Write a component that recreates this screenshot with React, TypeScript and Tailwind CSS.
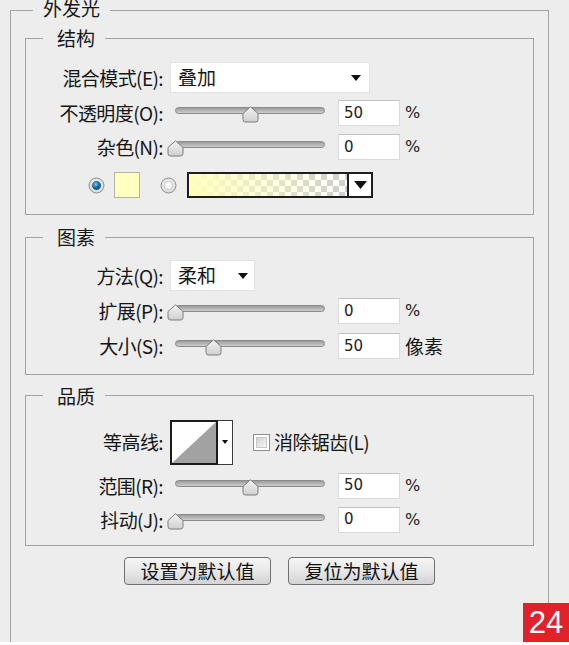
import React from 'react';

const cjk = "font-['Noto_Sans_CJK_SC','Noto_Sans',sans-serif]";

function Arrow({ big }: { big?: boolean }) {
  return big ? (
    <svg width="13" height="8" viewBox="0 0 13 8">
      <path d="M0 0 H13 L6.5 8 Z" fill="#111" />
    </svg>
  ) : (
    <svg width="10" height="6" viewBox="0 0 10 6">
      <path d="M0 0 H10 L5 6 Z" fill="#111" />
    </svg>
  );
}

function Thumb() {
  return (
    <svg width="17" height="17" viewBox="0 0 17 17">
      <defs>
        <linearGradient id="th" x1="0" y1="0" x2="0" y2="1">
          <stop offset="0" stopColor="#f4f4f4" />
          <stop offset="1" stopColor="#cfcfcf" />
        </linearGradient>
      </defs>
      <path
        d="M8.5 0.8 L16 7.5 V13.5 Q16 16 13.5 16 H3.5 Q1 16 1 13.5 V7.5 Z"
        fill="url(#th)"
        stroke="#7d7d7d"
        strokeWidth="1"
      />
    </svg>
  );
}

function Slider({ pos }: { pos: number }) {
  return (
    <div className="relative ml-[5px] h-[26px] w-[150px] shrink-0">
      <div className="mt-[7px] h-[7px] rounded-full border border-[#8a8a8a] bg-linear-to-b from-[#9c9c9c] to-[#cdcdcd]" />
      <div className="absolute top-[6px]" style={{ left: pos - 8 }}>
        <Thumb />
      </div>
    </div>
  );
}

function NumBox({ value }: { value: string }) {
  return (
    <div className="ml-[13px] flex h-[26px] w-[62px] items-center border border-[#dadada] border-t-[#c2c2c2] bg-white pl-[5px] font-['DejaVu_Sans',sans-serif] text-[15px] text-[#222]">
      {value}
    </div>
  );
}

function Unit({ children }: { children: React.ReactNode }) {
  return <span className="ml-[5px] font-['DejaVu_Sans',sans-serif] text-[16px] text-[#222]">{children}</span>;
}

function Row({ label, className, children }: { label: string; className?: string; children: React.ReactNode }) {
  return (
    <div className={`flex items-center ${className ?? ''}`}>
      <div className="w-[137px] shrink-0 text-right leading-[22px] tracking-[-0.6px]">{label}</div>
      <div className="ml-[7px] flex items-center">{children}</div>
    </div>
  );
}

function Group({ title, className, children }: { title: string; className?: string; children: React.ReactNode }) {
  return (
    <fieldset className={`w-[509px] border border-[#a3a3a3] ${className ?? ''}`}>
      <legend className="ml-[17px] pl-[14px] pr-[10px] leading-[22px]">{title}</legend>
      {children}
    </fieldset>
  );
}

function Radio({ checked }: { checked?: boolean }) {
  return (
    <svg width="17" height="17" viewBox="0 0 17 17">
      <defs>
        <radialGradient id="rOff" cx="0.5" cy="0.45" r="0.6">
          <stop offset="0" stopColor="#ffffff" />
          <stop offset="1" stopColor="#d2d2d2" />
        </radialGradient>
        <radialGradient id="rOn" cx="0.4" cy="0.35" r="0.7">
          <stop offset="0" stopColor="#7fd0f4" />
          <stop offset="0.5" stopColor="#1c74ad" />
          <stop offset="1" stopColor="#0b3f68" />
        </radialGradient>
      </defs>
      <circle cx="8.5" cy="8.5" r="7.5" fill="url(#rOff)" stroke="#8e8f8f" />
      {checked ? (
        <circle cx="8.5" cy="8.5" r="4.2" fill="url(#rOn)" stroke="#2a5d82" strokeWidth="0.6" />
      ) : (
        <circle cx="8.5" cy="8.5" r="4.2" fill="none" stroke="#c4c4c4" strokeWidth="0.8" />
      )}
    </svg>
  );
}

function GradientBar() {
  return (
    <div className="ml-[10px] flex h-[26px] w-[186px] border-2 border-[#1e1e1e] bg-white">
      <svg width="158" height="22" viewBox="0 0 158 22" className="shrink-0">
        <defs>
          <pattern id="chk" width="12" height="12" patternUnits="userSpaceOnUse">
            <rect width="12" height="12" fill="#ffffff" />
            <rect width="6" height="6" fill="#cfcfcf" />
            <rect x="6" y="6" width="6" height="6" fill="#cfcfcf" />
          </pattern>
          <linearGradient id="fade" x1="0" y1="0" x2="1" y2="0">
            <stop offset="0" stopColor="#ffffbe" stopOpacity="1" />
            <stop offset="1" stopColor="#ffffbe" stopOpacity="0" />
          </linearGradient>
        </defs>
        <rect width="158" height="22" fill="url(#chk)" />
        <rect width="158" height="22" fill="url(#fade)" />
      </svg>
      <div className="flex flex-1 items-center justify-center border-l-2 border-[#1e1e1e]">
        <Arrow big />
      </div>
    </div>
  );
}

function Contour() {
  return (
    <div className="flex h-[45px]">
      <div className="h-[45px] w-[48px] border-2 border-[#1c1c1c] bg-white">
        <svg width="44" height="41" viewBox="0 0 44 41">
          <path d="M0 41 L44 0 V41 Z" fill="#a2a2a2" />
        </svg>
      </div>
      <div className="flex w-[15px] items-center justify-center border border-l-0 border-[#3a3a3a] bg-white">
        <svg width="6" height="4" viewBox="0 0 6 4">
          <path d="M0 0 H6 L3 4 Z" fill="#111" />
        </svg>
      </div>
    </div>
  );
}

function Checkbox() {
  return (
    <div className="ml-[20px] flex h-[17px] w-[17px] items-center justify-center border border-[#8e8f8f] bg-white">
      <div className="h-[11px] w-[11px] border border-[#c8c8c8] bg-linear-to-br from-[#d4d4d4] to-[#f6f6f6]" />
    </div>
  );
}

function Button({ children }: { children: React.ReactNode }) {
  return (
    <button className="flex h-[28px] w-[147px] items-center justify-center rounded-[4px] border border-[#707070] bg-linear-to-b from-[#f5f5f5] via-[#e8e8e8] to-[#d3d3d3] text-[19px] leading-none text-[#111]">
      {children}
    </button>
  );
}

export default function App() {
  return (
    <div className={`h-[645px] w-[569px] overflow-hidden bg-white ${cjk} text-[19px] text-[#161616]`}>
      <div className="relative h-[642px] overflow-hidden bg-[#ededed]">
        <fieldset className="ml-[10px] h-[700px] w-[539px] border border-[#a3a3a3] px-[14px] pt-[7px]">
          <legend className="ml-2 px-[10px] leading-[20px]">
            <span className="relative -top-[2px]">外发光</span>
          </legend>

          <Group title="结构" className="pb-[16px] pt-[13px]">
            <Row label="混合模式(E):">
              <div className="flex h-[31px] w-[200px] items-center justify-between border border-[#e2e2e2] bg-white pl-[7px] pr-[8px]">
                <span>叠加</span>
                <Arrow />
              </div>
            </Row>
            <Row label="不透明度(O):" className="mt-[7px]">
              <Slider pos={75} />
              <NumBox value="50" />
              <Unit>%</Unit>
            </Row>
            <Row label="杂色(N):" className="mt-[8px]">
              <Slider pos={0} />
              <NumBox value="0" />
              <Unit>%</Unit>
            </Row>
            <div className="ml-[62px] mt-[12px] flex h-[26px] items-center">
              <Radio checked />
              <div className="ml-[9px] h-[26px] w-[26px] border border-[#b4b4a0] bg-[#ffffc0]" />
              <div className="ml-[20px]">
                <Radio />
              </div>
              <GradientBar />
            </div>
          </Group>

          <Group title="图素" className="mt-[11px] pb-[13px] pt-[12px]">
            <Row label="方法(Q):">
              <div className="flex h-[31px] w-[85px] items-center justify-between border border-[#e2e2e2] bg-white pl-[7px] pr-[6px]">
                <span>柔和</span>
                <Arrow />
              </div>
            </Row>
            <Row label="扩展(P):" className="mt-[7px]">
              <Slider pos={0} />
              <NumBox value="0" />
              <Unit>%</Unit>
            </Row>
            <Row label="大小(S):" className="mt-[8px]">
              <Slider pos={38} />
              <NumBox value="50" />
              <span className="ml-[5px]">像素</span>
            </Row>
          </Group>

          <Group title="品质" className="mt-[10px] pb-[12px] pt-[13px]">
            <Row label="等高线:">
              <Contour />
              <Checkbox />
              <span className="ml-[4px] tracking-[-0.6px]">消除锯齿(L)</span>
            </Row>
            <Row label="范围(R):" className="mt-[8px]">
              <Slider pos={75} />
              <NumBox value="50" />
              <Unit>%</Unit>
            </Row>
            <Row label="抖动(J):" className="mt-[8px]">
              <Slider pos={0} />
              <NumBox value="0" />
              <Unit>%</Unit>
            </Row>
          </Group>

          <div className="mt-[11px] flex w-[509px] justify-center gap-[17px]">
            <Button>设置为默认值</Button>
            <Button>复位为默认值</Button>
          </div>
        </fieldset>

        <div className="absolute bottom-0 right-0 flex h-[39px] w-[46px] items-center justify-center bg-[#e1222b] font-['Liberation_Sans',sans-serif] text-[31px] leading-none text-white">
          24
        </div>
      </div>
    </div>
  );
}
